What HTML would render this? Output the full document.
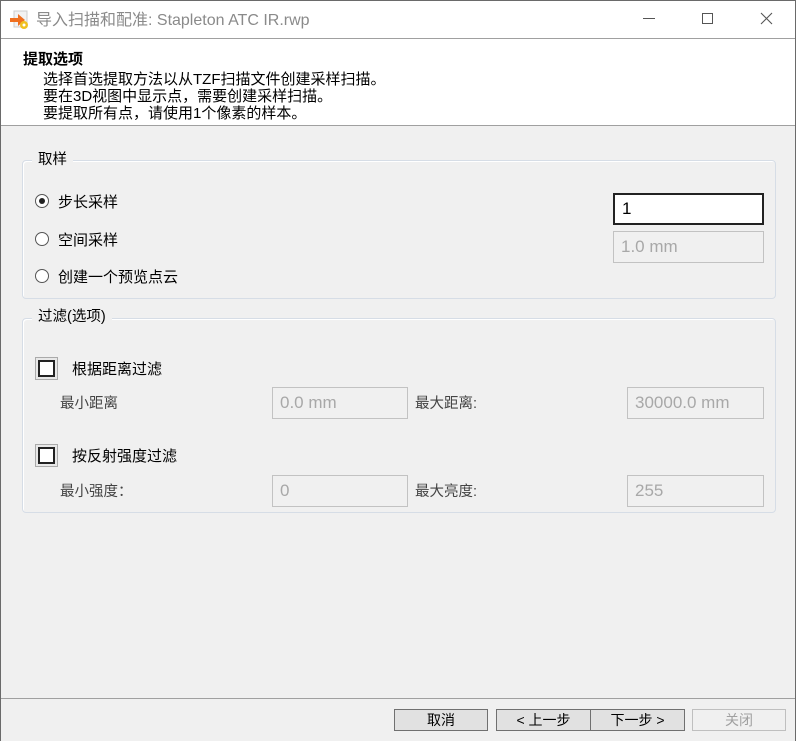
<!DOCTYPE html>
<html><head><meta charset="utf-8"><style>
*{margin:0;padding:0;box-sizing:border-box}
body{width:796px;height:741px;background:#f0f0f0;font-family:"Liberation Sans","Noto Sans CJK SC",sans-serif;font-size:15px;line-height:17px;color:#000;position:relative;overflow:hidden}
.a{position:absolute;white-space:nowrap}
.win{position:absolute;left:0;top:0;width:796px;height:741px;border:1px solid #6a6a6a;border-bottom:none}
.grp{position:absolute;border:1px solid #d6dde6;border-radius:4px;box-shadow:inset 1px 1px 0 #fff}
.lg{position:absolute;background:#f0f0f0;padding:0 6px;font-size:14.5px;white-space:nowrap}
.radio{position:absolute;width:14px;height:14px;border:1px solid #555;border-radius:50%;background:#fff}
.cb{position:absolute;width:23px;height:23px;border:1px solid #aaa;background:#e8e8e8}
.cbi{position:absolute;width:17px;height:17px;border:2px solid #222;background:#fff}
.inp{position:absolute;border:1px solid #c2c2c2;background:#f0f0f0;color:#a8a8a8;font-size:17px;padding-left:7px;line-height:29px}
.sl{font-size:14.5px;color:#444}
.btn{position:absolute;top:709px;height:22px;border:1px solid #707070;background:#e1e1e1;text-align:center;line-height:21px;font-size:14px}
</style></head><body>
<div class="a" style="left:0;top:0;width:796px;height:38px;background:#fff"></div>
<div class="a" style="left:0;top:38px;width:796px;height:88px;background:#fff;border-top:1px solid #a0a0a0;border-bottom:1px solid #a0a0a0"></div>
<svg class="a" style="left:9px;top:10px" width="22" height="20"><rect x="5" y="1" width="13" height="16" fill="#f2f2f2" stroke="#ccc"/><path d="M1 8h8V4l7 6-7 6v-4H1z" fill="#f07020"/><circle cx="15" cy="15" r="4" fill="#f0c020"/><circle cx="15" cy="15" r="1.5" fill="#fff"/></svg>
<div class="a" style="left:36px;top:11px;font-size:16px;line-height:19px;color:#8a8a8a">导入扫描和配准: Stapleton ATC IR.rwp</div>
<div class="a" style="left:643px;top:18px;width:12px;height:1px;background:#555"></div>
<div class="a" style="left:702px;top:13px;width:11px;height:11px;border:1px solid #555"></div>
<svg class="a" style="left:760px;top:12px" width="13" height="13"><path d="M1 1L12 12M12 1L1 12" stroke="#555" stroke-width="1.1"/></svg>
<div class="a" style="left:23px;top:51px;font-weight:bold">提取选项</div>
<div class="a" style="left:43px;top:71px">选择首选提取方法以从TZF扫描文件创建采样扫描。</div>
<div class="a" style="left:43px;top:88px">要在3D视图中显示点，需要创建采样扫描。</div>
<div class="a" style="left:43px;top:105px">要提取所有点，请使用1个像素的样本。</div>

<div class="grp" style="left:22px;top:160px;width:754px;height:139px"></div>
<div class="lg" style="left:32px;top:152px">取样</div>
<div class="radio" style="left:35px;top:194px"></div><div class="a" style="left:39px;top:198px;width:6px;height:6px;border-radius:50%;background:#222"></div>
<div class="a" style="left:58px;top:194px">步长采样</div>
<div class="radio" style="left:35px;top:232px"></div><div class="a" style="left:58px;top:232px">空间采样</div>
<div class="radio" style="left:35px;top:269px"></div><div class="a" style="left:58px;top:269px">创建一个预览点云</div>
<div class="a" style="left:613px;top:193px;width:151px;height:32px;border:2px solid #222;background:#fff;font-size:17px;padding-left:7px;line-height:28px">1</div>
<div class="inp" style="left:613px;top:231px;width:151px;height:32px">1.0 mm</div>

<div class="grp" style="left:22px;top:318px;width:754px;height:195px"></div>
<div class="lg" style="left:32px;top:309px">过滤(选项)</div>
<div class="cb" style="left:35px;top:357px"></div><div class="cbi" style="left:38px;top:360px"></div><div class="a" style="left:72px;top:361px">根据距离过滤</div>
<div class="a sl" style="left:60px;top:396px">最小距离</div>
<div class="inp" style="left:272px;top:387px;width:136px;height:32px">0.0 mm</div>
<div class="a sl" style="left:415px;top:396px">最大距离:</div>
<div class="inp" style="left:627px;top:387px;width:137px;height:32px">30000.0 mm</div>
<div class="cb" style="left:35px;top:444px"></div><div class="cbi" style="left:38px;top:447px"></div><div class="a" style="left:72px;top:448px">按反射强度过滤</div>
<div class="a sl" style="left:60px;top:484px">最小强度：</div>
<div class="inp" style="left:272px;top:475px;width:136px;height:32px">0</div>
<div class="a sl" style="left:415px;top:484px">最大亮度:</div>
<div class="inp" style="left:627px;top:475px;width:137px;height:32px">255</div>

<div class="a" style="left:0;top:698px;width:796px;height:1px;background:#a0a0a0"></div>
<div class="btn" style="left:394px;width:94px">取消</div>
<div class="btn" style="left:496px;width:95px">&lt; 上一步</div>
<div class="btn" style="left:590px;width:95px">下一步 &gt;</div>
<div class="btn" style="left:692px;width:94px;border-color:#bfbfbf;background:#f0f0f0;color:#a0a0a0">关闭</div>
<div class="win"></div>
</body></html>
